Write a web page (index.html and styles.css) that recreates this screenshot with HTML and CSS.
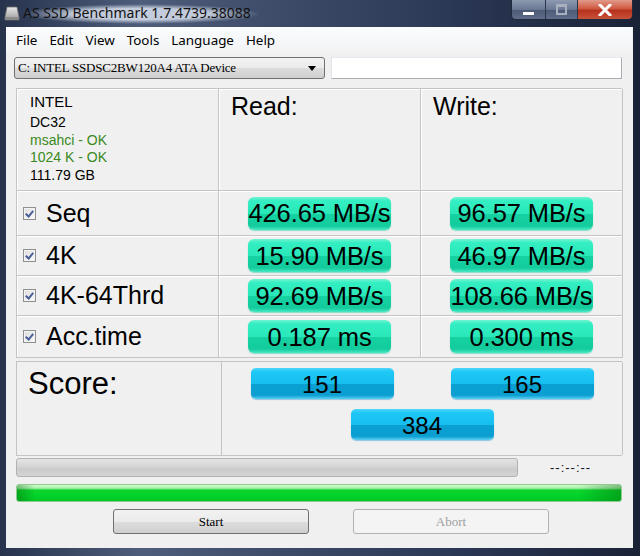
FILE: index.html
```html
<!doctype html>
<html>
<head>
 <meta charset="utf-8">
 <title>AS SSD Benchmark</title>
 <link rel="stylesheet" href="styles.css">
</head>
<body>
 <div class="window">
  <div class="titlebar">
   <svg class="appicon" width="16" height="16" viewBox="0 0 16 16">
    <defs>
     <linearGradient id="drv" x1="0" y1="0" x2="0" y2="1">
      <stop offset="0" stop-color="#e8e8e8"/>
      <stop offset="1" stop-color="#9a9a9a"/>
     </linearGradient>
    </defs>
    <path d="M3 2 L13 2 L15 12 L15 15 L1 15 L1 12 Z" fill="url(#drv)" stroke="#6c6c6c" stroke-width="0.8"/>
    <rect x="1.5" y="12" width="13" height="2.5" fill="#8a8a8a"/>
   </svg>
   <span class="title">AS SSD Benchmark 1.7.4739.38088</span>
   <div class="capbtns">
    <div class="cbtn min"><span></span></div>
    <div class="cbtn max"><span></span></div>
    <div class="cbtn close">
     <svg width="14" height="12" viewBox="0 0 14 12"><path d="M2 1 L12 11 M12 1 L2 11" stroke="#fff" stroke-width="3" stroke-linecap="square"/></svg>
    </div>
   </div>
  </div>

  <div class="client">
   <ul class="menu">
    <li>File</li>
    <li>Edit</li>
    <li>View</li>
    <li>Tools</li>
    <li>Language</li>
    <li>Help</li>
   </ul>

   <div class="devrow">
    <div class="combo">
     <span>C: INTEL SSDSC2BW120A4 ATA Device</span>
     <i class="arrow"></i>
    </div>
    <div class="textbox"></div>
   </div>

   <div class="results">
    <div class="cell info">
     <p class="brand">INTEL</p>
     <p>DC32</p>
     <p class="ok">msahci - OK</p>
     <p class="ok">1024 K - OK</p>
     <p>111.79 GB</p>
    </div>
    <div class="cell head">Read:</div>
    <div class="cell head">Write:</div>

    <div class="cell label"><span class="chk"></span>Seq</div>
    <div class="cell"><div class="val">426.65 MB/s</div></div>
    <div class="cell"><div class="val">96.57 MB/s</div></div>

    <div class="cell label"><span class="chk"></span>4K</div>
    <div class="cell"><div class="val">15.90 MB/s</div></div>
    <div class="cell"><div class="val">46.97 MB/s</div></div>

    <div class="cell label"><span class="chk"></span>4K-64Thrd</div>
    <div class="cell"><div class="val">92.69 MB/s</div></div>
    <div class="cell"><div class="val">108.66 MB/s</div></div>

    <div class="cell label"><span class="chk"></span>Acc.time</div>
    <div class="cell"><div class="val">0.187 ms</div></div>
    <div class="cell"><div class="val">0.300 ms</div></div>
   </div>

   <div class="score">
    <div class="score-label">Score:</div>
    <div class="score-vals">
     <div class="slot"><div class="sval">151</div></div>
     <div class="slot"><div class="sval">165</div></div>
     <div class="slot total"><div class="sval">384</div></div>
    </div>
   </div>

   <div class="progrow">
    <div class="bar-gray"></div>
    <span class="time">--:--:--</span>
   </div>
   <div class="bar-green"></div>

   <div class="buttons">
    <button class="btn">Start</button>
    <button class="btn" disabled>Abort</button>
   </div>
  </div>
 </div>
</body>
</html>
```

FILE: styles.css
```css
html,body{margin:0;padding:0;background:#1d2840;}
p,ul,li{margin:0;padding:0;}
ul{list-style:none;}

.window{width:640px;height:556px;display:flex;flex-direction:column;background:linear-gradient(90deg,#27334d 0%,#4e5d7b 22%,#3c4a67 45%,#2b3856 70%,#1a2236 100%);font-family:"Liberation Sans",Arial,sans-serif;color:#000;}

/* title bar */
.titlebar{height:27px;display:flex;align-items:flex-start;flex-shrink:0;}
.appicon{margin:5px 0 0 4px;}
.title{margin:4px 0 0 1px;font-family:"Noto Sans",sans-serif;font-size:14px;line-height:18px;color:#111;background:radial-gradient(ellipse at center,rgba(225,232,245,.8) 40%,rgba(225,232,245,0) 70%);padding:0 10px 2px 2px;}
.capbtns{margin-left:auto;margin-right:7px;display:flex;border:1px solid #202a3c;border-top:0;border-radius:0 0 5px 5px;overflow:hidden;}
.cbtn{height:19px;display:flex;align-items:center;justify-content:center;}
.cbtn.min{width:33px;background:linear-gradient(#8d99b1,#6b7894 50%,#4d5a76 51%,#5f6d8a);border-right:1px solid #2b3449;}
.cbtn.min span{width:11px;height:3px;background:#fff;margin-top:7px;box-shadow:0 0 1px #333;}
.cbtn.max{width:31px;background:linear-gradient(#8d99b1,#6b7894 50%,#4d5a76 51%,#5f6d8a);border-right:1px solid #2b3449;}
.cbtn.max span{width:7px;height:6px;border:2px solid #a8b0c0;border-top-width:3px;}
.cbtn.close{width:54px;background:linear-gradient(#e29a8a,#cf5a43 45%,#b7321c 55%,#c8523a);}

/* client */
.client{flex:1;margin:0 7px 8px 6px;background:#f0f0f0;display:flex;flex-direction:column;padding:0 11px 0 10px;}
.menu{height:25px;display:flex;align-items:center;margin:0 -10px 0 -10px;padding-left:10px;background:linear-gradient(#fbfcfd,#f2f3f5);font-family:"Noto Sans",sans-serif;font-size:13.4px;}
.menu li{margin-right:12px;padding:0;}

.devrow{display:flex;margin-top:5px;margin-left:-2px;height:22px;}
.combo{width:306px;height:20px;border:1px solid #707070;border-radius:3px;background:linear-gradient(#f2f2f2,#ebebeb 50%,#dddddd 51%,#cfcfcf);display:flex;align-items:center;font-family:"Liberation Serif",serif;font-size:13px;padding-left:3px;box-sizing:content-box;}
.combo span{flex:1;letter-spacing:-0.2px;}
.arrow{width:0;height:0;border-left:4px solid transparent;border-right:4px solid transparent;border-top:5px solid #000;margin-right:8px;}
.textbox{width:289px;height:20px;margin-left:6px;border:1px solid #abadb3;border-top-color:#e3e9ef;border-left-color:#e2e3ea;background:#fff;}

/* result grid */
.results{margin-top:9px;display:grid;grid-template-columns:202px 202px 202px;grid-template-rows:102px 45px 40px 40px 42px;border-top:1px solid #c4c4c4;border-left:1px solid #c4c4c4;}
.cell{border-right:1px solid #c4c4c4;border-bottom:1px solid #c4c4c4;display:flex;align-items:center;justify-content:center;box-shadow:inset 1px 1px 0 #fff;}
.cell.info{display:block;padding:3px 0 0 13px;font-size:14px;line-height:17.5px;}
.cell.info .brand{font-size:15px;line-height:20px;margin-bottom:2px;}
.cell.info .ok{color:#3a8a22;}
.cell.head{display:block;padding:2px 0 0 12px;font-size:25px;line-height:30px;}
.cell.label{justify-content:flex-start;padding-left:6px;font-size:25px;}
.chk{width:11px;height:11px;border:1px solid #8e8f8f;background:linear-gradient(135deg,#dcdcdc,#fbfbfb) padding-box;margin-right:10px;position:relative;box-shadow:inset 0 0 0 1px #f4f4f4;}
.chk::after{content:"";position:absolute;left:3px;top:1px;width:3px;height:6px;border:solid #4a5f9a;border-width:0 2px 2px 0;transform:rotate(40deg);}

.val{width:143px;height:33px;border-radius:6px;display:flex;align-items:center;justify-content:center;font-size:25.5px;letter-spacing:-0.1px;padding-top:1px;box-sizing:border-box;background:linear-gradient(#6ff4d2 0%,#33eec2 12%,#2ae8ba 50%,#16d2a3 52%,#13cb9c 88%,#48e9c4 100%);box-shadow:0 1px 1px rgba(40,200,160,.5);}

/* score */
.score{margin-top:3px;height:95px;display:grid;grid-template-columns:205px 401px;border:1px solid #c4c4c4;border-right:0;box-sizing:border-box;}
.score-label{border-right:1px solid #c4c4c4;font-size:31px;padding:4px 0 0 11px;line-height:36px;}
.score-vals{border-right:1px solid #c4c4c4;display:flex;flex-wrap:wrap;align-content:flex-start;padding-top:6px;}
.slot{width:50%;display:flex;justify-content:center;height:41px;}
.slot.total{width:100%;}
.sval{width:143px;height:31px;border-radius:5px;display:flex;align-items:center;justify-content:center;font-size:24px;padding-top:2px;box-sizing:border-box;background:linear-gradient(#4fd6fb 0%,#1fc7f6 12%,#17bff0 50%,#0aa0d2 52%,#0a9fd0 88%,#5ccff3 100%);box-shadow:0 1px 1px rgba(20,150,210,.45);}

/* progress */
.progrow{margin-top:2px;height:19px;display:flex;align-items:center;}
.bar-gray{width:500px;height:17px;border:1px solid #b2b2b2;border-radius:3px;background:linear-gradient(#e4e4e4,#d6d6d6 40%,#cbcbcb 60%,#d4d4d4);}
.time{margin-left:32px;font-size:13px;letter-spacing:1px;color:#111;}
.bar-green{margin-top:7px;height:16px;border:1px solid #8fca8f;border-radius:3px;background:linear-gradient(90deg,rgba(0,80,0,.35),rgba(0,0,0,0) 3%,rgba(0,0,0,0) 93%,rgba(0,80,0,.35)),linear-gradient(#d2fbd2 0%,#a4f2a6 20%,#0ed52e 32%,#00d229 70%,#00c826 100%);}

/* buttons */
.buttons{margin-top:7px;display:flex;padding-left:97px;gap:44px;}
.btn{width:196px;height:25px;border:1px solid #707070;border-radius:3px;background:linear-gradient(#f2f2f2,#ebebeb 50%,#dddddd 51%,#cfcfcf);font-family:"Liberation Serif",serif;font-size:13px;color:#000;padding:0;}
.btn:disabled{border-color:#adb2b5;background:#f4f4f4;color:#a0a0a0;}
```
